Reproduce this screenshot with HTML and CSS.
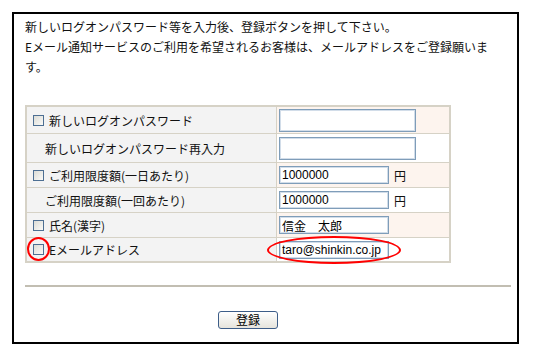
FILE: index.html
```html
<!DOCTYPE html>
<html lang="ja">
<head>
  <meta charset="UTF-8">
  <title>ログオンパスワード登録</title>
  <link rel="stylesheet" href="styles.css">
</head>
<body>
  <div class="panel">
    <p class="intro">新しいログオンパスワード等を入力後、登録ボタンを押して下さい。<br>Eメール通知サービスのご利用を希望されるお客様は、メールアドレスをご登録願います。</p>

    <div class="form-grid">
      <div class="label"><input type="checkbox" class="chk">新しいログオンパスワード</div>
      <div class="field tint"><input type="password" class="text wide"></div>

      <div class="label indent">新しいログオンパスワード再入力</div>
      <div class="field"><input type="password" class="text wide"></div>

      <div class="label"><input type="checkbox" class="chk">ご利用限度額(一日あたり)</div>
      <div class="field tint"><input type="text" class="text" value="1000000"><span class="unit">円</span></div>

      <div class="label indent">ご利用限度額(一回あたり)</div>
      <div class="field"><input type="text" class="text" value="1000000"><span class="unit">円</span></div>

      <div class="label"><input type="checkbox" class="chk">氏名(漢字)</div>
      <div class="field tint"><input type="text" class="text" value="信金　太郎"></div>

      <div class="label"><input type="checkbox" class="chk">Eメールアドレス</div>
      <div class="field"><input type="text" class="text" value="taro@shinkin.co.jp"></div>
    </div>

    <div class="rule"></div>

    <div class="actions">
      <button type="button">登録</button>
    </div>

    <!-- 注記用の赤丸 -->
    <span class="mark circle"></span>
    <span class="mark ellipse"></span>
  </div>
</body>
</html>
```

FILE: styles.css
```css
body {
  margin: 12px;
  font-family: "Noto Sans CJK JP", sans-serif;
  font-size: 12px;
  color: #111;
  background: #fff;
}

.panel {
  position: relative;
  width: 481px;
  height: 314px;
  padding: 3px 11px 11px 11px;
  border: 2px solid #000;
}

.intro {
  margin: 0;
  width: 480px;
  line-height: 20px;
}

.form-grid {
  display: grid;
  grid-template-columns: 249px 172px;
  grid-template-rows: 26px 28px 24px 24px 24px 23px;
  gap: 1px;
  width: 422px;
  margin-top: 28px;
  padding: 2px;
  background: #d6d2c6;
}

.label {
  display: flex;
  align-items: center;
  gap: 5px;
  padding-left: 6px;
  background: #f3f3f3;
}

.label.indent {
  padding-left: 18px;
}

.chk {
  appearance: none;
  width: 11px;
  height: 11px;
  margin: 0;
  border: 1px solid #4d6f93;
  background: linear-gradient(135deg, #dcdcd6, #fafaf8);
}

.field {
  display: flex;
  align-items: center;
  padding-left: 2px;
  background: #fff;
}

.field.tint {
  background: #fdf4ee;
}

.text {
  box-sizing: border-box;
  width: 110px;
  height: 18px;
  margin: 0;
  padding: 0 2px;
  border: 1px solid #7f9db9;
  box-shadow: inset 0 0 0 1px #d2dde9;
  font-family: "Liberation Sans", "Noto Sans CJK JP", sans-serif;
  font-size: 12px;
  color: #000;
  background: #fff;
}

.text.wide {
  width: 137px;
  height: 23px;
}

.unit {
  margin-left: 5px;
}

.rule {
  height: 2px;
  width: 486px;
  margin-top: 22px;
  background: #c2beb2;
}

.actions {
  margin-top: 24px;
  padding-left: 193px;
}

button {
  width: 60px;
  height: 18px;
  padding: 0;
  border: 1px solid #3d5d88;
  border-radius: 3px;
  background: linear-gradient(#ffffff, #e6e4dc);
  font-family: "Noto Sans CJK JP", sans-serif;
  font-size: 12px;
  line-height: 14px;
  color: #000;
}

.mark {
  position: absolute;
  border: 2px solid #f00;
  border-radius: 50%;
}

.circle {
  left: 13px;
  top: 223px;
  width: 19px;
  height: 20px;
}

.ellipse {
  left: 253px;
  top: 222px;
  width: 130px;
  height: 24px;
}
```
